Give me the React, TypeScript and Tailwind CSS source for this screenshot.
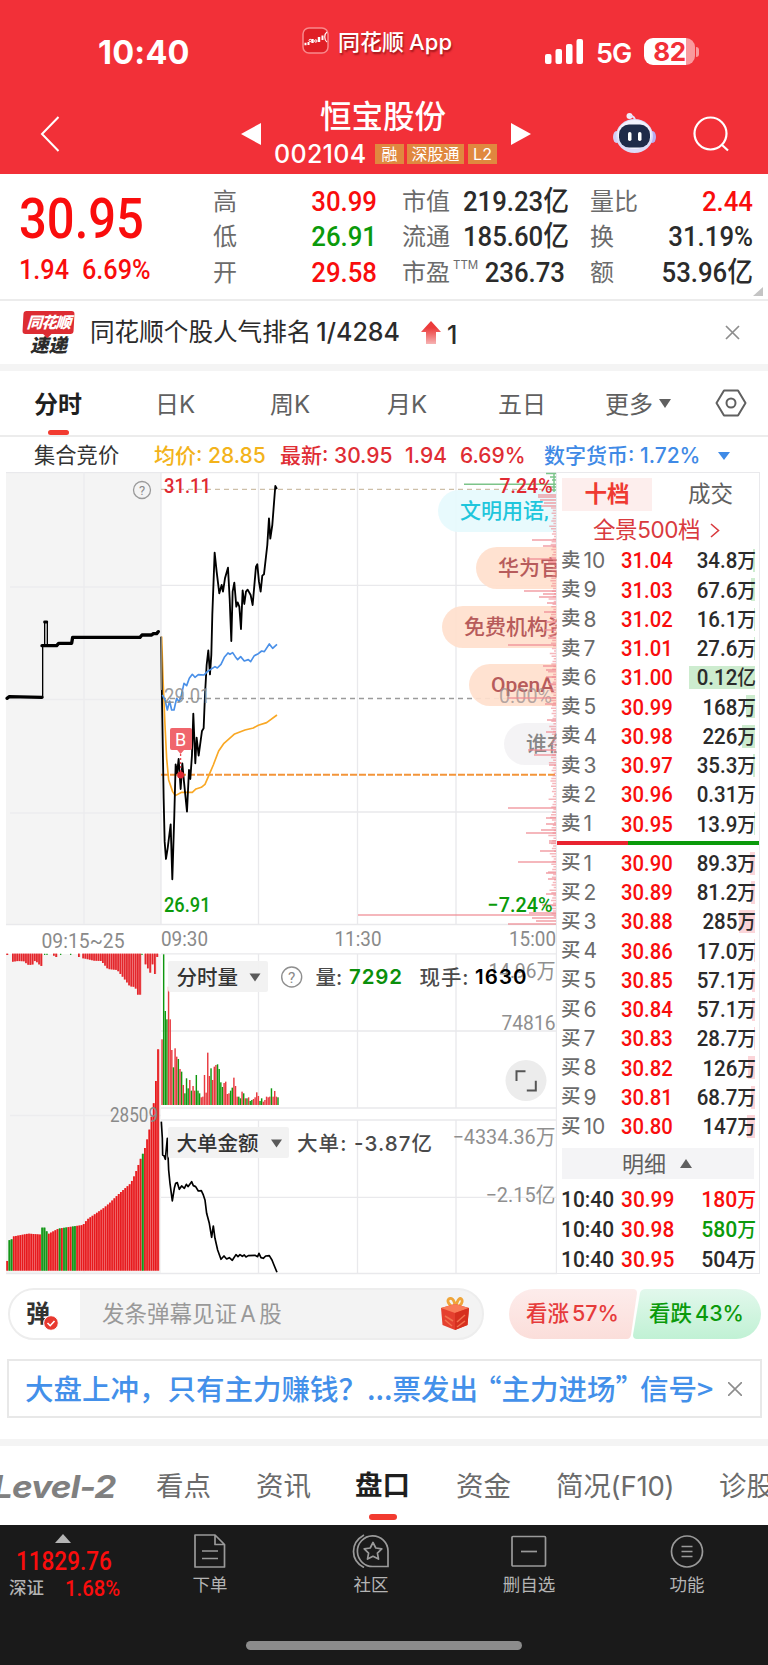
import { Fragment, type SVGProps } from "react";
import clsx from "clsx";

type Tone = "r" | "g";

interface Level {
  name: string;
  no: number;
  price: string;
  volume: string;
  depth: number;
}

const NUM = "[font-family:Roboto,'Noto_Sans_CJK_SC',sans-serif] font-medium";
const GRID = "#e9e9ec";

const sells: Level[] = [
  { name: "卖", no: 10, price: "31.04", volume: "34.8万", depth: 2 },
  { name: "卖", no: 9, price: "31.03", volume: "67.6万", depth: 4 },
  { name: "卖", no: 8, price: "31.02", volume: "16.1万", depth: 1 },
  { name: "卖", no: 7, price: "31.01", volume: "27.6万", depth: 1 },
  { name: "卖", no: 6, price: "31.00", volume: "0.12亿", depth: 66 },
  { name: "卖", no: 5, price: "30.99", volume: "168万", depth: 9 },
  { name: "卖", no: 4, price: "30.98", volume: "226万", depth: 13 },
  { name: "卖", no: 3, price: "30.97", volume: "35.3万", depth: 2 },
  { name: "卖", no: 2, price: "30.96", volume: "0.31万", depth: 0 },
  { name: "卖", no: 1, price: "30.95", volume: "13.9万", depth: 1 },
];

const buys: Level[] = [
  { name: "买", no: 1, price: "30.90", volume: "89.3万", depth: 5 },
  { name: "买", no: 2, price: "30.89", volume: "81.2万", depth: 4 },
  { name: "买", no: 3, price: "30.88", volume: "285万", depth: 16 },
  { name: "买", no: 4, price: "30.86", volume: "17.0万", depth: 1 },
  { name: "买", no: 5, price: "30.85", volume: "57.1万", depth: 3 },
  { name: "买", no: 6, price: "30.84", volume: "57.1万", depth: 3 },
  { name: "买", no: 7, price: "30.83", volume: "28.7万", depth: 1 },
  { name: "买", no: 8, price: "30.82", volume: "126万", depth: 7 },
  { name: "买", no: 9, price: "30.81", volume: "68.7万", depth: 4 },
  { name: "买", no: 10, price: "30.80", volume: "147万", depth: 8 },
];

const ticks = [
  { time: "10:40", price: "30.99", volume: "180万", tone: "text-[#f90d0d]" },
  { time: "10:40", price: "30.98", volume: "580万", tone: "text-[#0b9a0b]" },
  { time: "10:40", price: "30.95", volume: "504万", tone: "text-[#2b2b2b]" },
];

// All series live on a 3x grid, see the scale() on their groups
const PRICE =
  "483,515 487,760 491,1000 494,1130 498,1182 503,1150 512,1078 517,1243 523,1050 527,898 531,925 536,882 542,972 547,895 552,950 561,1040 567,915 571,942 576,870 580,746 586,895 590,818 596,872 606,798 611,790 615,690 620,600 625,556 630,628 634,570 637,450 644,263 650,320 658,385 665,360 669,380 675,340 684,308 689,400 694,528 698,380 703,353 709,425 713,412 718,425 723,492 728,376 733,417 738,380 743,374 752,390 758,420 768,305 772,298 777,350 782,380 787,332 792,328 802,240 807,160 811,221 817,180 826,63 831,72";
const INDUSTRY =
  "487,690 495,705 502,735 509,708 515,735 522,735 530,700 537,710 542,700 552,655 560,662 568,640 577,628 585,637 595,629 612,630 622,620 645,605 652,609 663,598 673,577 684,564 690,568 698,563 706,575 713,584 722,575 733,588 745,584 752,590 763,572 775,566 785,558 793,560 808,537 818,550 831,538";
const AVERAGE =
  "485,515 489,640 495,780 500,880 506,945 518,980 526,992 545,982 577,982 588,972 604,967 615,958 625,935 640,900 656,858 672,835 704,807 735,795 760,789 775,781 800,773 831,750";
const BIG_ORDER =
  "484,590 487,640 488,690 492,692 496,703 502,640 506,735 510,775 517,828 523,790 527,775 532,773 538,793 545,783 553,790 559,778 564,785 575,770 580,782 587,785 595,798 604,797 610,810 615,825 620,865 628,895 635,937 640,903 645,940 653,975 663,1003 672,993 680,1002 688,998 697,1006 708,989 714,995 720,989 727,994 733,990 738,996 745,992 765,991 773,995 777,985 783,998 790,1000 797,993 808,992 816,1005 822,1020 831,1042";

const VOLUME =
  "r343 g88 g258 g283 r185 r283 r375 g427 r370 r395 g402 r432 g440 r480 g505 g460 g490 r465 g497 r483 r497 g450 g497 g505 r517 r515 r450 r503 r383 r453 g430 r465 r425 r420 g418 g432 g472 g486 r474 r470 r507 r505 g497 g488 r458 r483 r515 g515 g520 r500 g505 r520 g520 r517 g528 g525 r522 r517 r502 r513 g528 g520 r530 r525 r515 r517 r515 g490 r515 r498 r515 g517"
    .split(" ")
    .map((s) => ({ tone: s[0] as Tone, top: Number(s.slice(1)) }));

const AUCTION_SHAPE = [
  [24, 946], [34, 945], [37, 935], [85, 926], [125, 929], [126, 908], [138, 908], [141, 929],
  [175, 911], [215, 905], [249, 900], [262, 883], [310, 850], [330, 833], [355, 808], [392, 775],
  [405, 748], [418, 712], [425, 692], [432, 680], [446, 625], [452, 590], [459, 548], [466, 502], [472, 373],
];
const UNMATCHED_SHAPE = [
  [37, 110], [52, 108], [72, 109], [80, 119], [95, 120], [104, 106], [114, 117], [124, 124],
];
const UNMATCHED_TAIL = [
  [250, 100], [280, 107], [302, 108], [312, 120], [322, 132], [350, 135], [370, 160], [388, 184],
  [404, 186], [411, 209], [418, 209],
];

function interpolate(shape: number[][], x: number) {
  for (let i = 1; i < shape.length; i++) {
    const [x0, y0] = shape[i - 1];
    const [x1, y1] = shape[i];
    if (x <= x1) return y0 + ((y1 - y0) * Math.max(0, x - x0)) / (x1 - x0);
  }
  return shape[shape.length - 1][1];
}

const GREEN_AUCTION = [1, 2, 16, 17, 18, 24, 26, 27, 30, 31, 62];
const STEP = 6.56;

const auctionBars = Array.from({ length: 70 }, (_, i) => {
  const x = 19 + i * STEP;
  return { x, top: i === 0 ? 1008 : interpolate(AUCTION_SHAPE, x + 2.5), green: GREEN_AUCTION.includes(i) };
});

const unmatchedBars = [
  ...Array.from({ length: 14 }, (_, i) => 37 + i * STEP).map((x) => ({ x, h: interpolate(UNMATCHED_SHAPE, x) })),
  ...Array.from({ length: 27 }, (_, i) => 248 + i * STEP).map((x) => ({ x, h: interpolate(UNMATCHED_TAIL, x) })),
  { x: 20, h: 90 }, { x: 160, h: 92 }, { x: 167, h: 96 }, { x: 235, h: 96 },
  { x: 435, h: 118 }, { x: 442, h: 130 }, { x: 449, h: 143 }, { x: 456, h: 118 }, { x: 463, h: 147 }, { x: 470, h: 96 },
];

// Chip distribution along the right edge: [left x, y]
const DEPTH_LONG = [
  [538, 495], [538, 497], [540, 500], [544, 503], [541, 506], [532, 540], [543, 546], [527, 559],
  [548, 562], [524, 591], [543, 594], [539, 597], [547, 603], [544, 612], [546, 622], [544, 630],
  [548, 638], [508, 645], [543, 666], [546, 670], [546, 677], [548, 684], [508, 698], [545, 704],
  [547, 720], [546, 732], [528, 750], [534, 755], [549, 765], [508, 808], [546, 818], [546, 824],
  [541, 830], [526, 833], [549, 841], [549, 843], [540, 851], [518, 862], [546, 873], [548, 879],
  [546, 894], [542, 905], [358, 915], [529, 913], [532, 918], [536, 921], [508, 924],
];
const depthShort = Array.from({ length: 158 }, (_, i) => ({
  y: 508 + i * 2.6,
  w: 2 + ((i * 37) % 11) * 0.3 + (i % 7 === 0 ? 3 : 0),
}));

const danmaku = [
  { x: 438, y: 490, text: "文明用语,", bg: "#e6fafd", color: "#1fc6dc" },
  { x: 476, y: 547, text: "华为官", bg: "#ffe0cd", color: "#b75b5b" },
  { x: 442, y: 606, text: "免费机构资", bg: "#ffe0cd", color: "#b75b5b" },
  { x: 469, y: 664, text: "OpenA", bg: "#ffe0cd", color: "#b75b5b" },
  { x: 504, y: 723, text: "谁在", bg: "#f3f2f4", color: "#868686" },
];

function Label(props: SVGProps<SVGTextElement>) {
  return <text lengthAdjust="spacingAndGlyphs" {...props} />;
}

function Header() {
  return (
    <header className="h-[174px] bg-[#f23038] text-white">
      <div className="flex h-[90px] items-start">
        <span className="ml-[98px] mt-[37px] w-[204px] text-[32.500px]/8 font-bold tracking-[0.2px]">10:40</span>
        <svg className="mt-[27px] shrink-0" width="27" height="27" viewBox="0 0 27 27">
          <rect x="1" y="1" width="25" height="25" rx="6" fill="#e01f26" stroke="#f9898c" strokeWidth="1.5" />
          <path d="M2.500 17h2M10.500 16v-4M17 15v-5" stroke="#fff" strokeWidth="2.400" />
          <path d="M6.500 18v-3M20.500 13V8.500" stroke="#fff" strokeWidth="2" />
          <circle cx="8.200" cy="13.500" r="1.200" stroke="#fff" fill="none" />
          <circle cx="13.800" cy="14" r="1.200" stroke="#fff" fill="none" />
          <path d="M25 5c-3 2-3 8 0 10" stroke="#fff" strokeWidth="1.200" fill="none" />
        </svg>
        <span className="ml-[9px] mt-[28px] flex w-[206px] gap-[5px] whitespace-nowrap text-[22px]/7 font-medium [text-shadow:1px_2px_2px_rgba(90,0,0,0.55)]">
          <span>同花顺</span>
          <span className="tracking-[0.2px]">App</span>
        </span>
        <svg className="mt-[39px] shrink-0" width="40" height="25" viewBox="0 0 40 25" fill="#fff">
          <rect x="1" y="15" width="6.500" height="10" rx="2" />
          <rect x="11.500" y="10" width="6.500" height="15" rx="2" />
          <rect x="22" y="5" width="6.500" height="20" rx="2" />
          <rect x="32.500" y="0" width="6.500" height="25" rx="2" />
        </svg>
        <span className="ml-[12px] mt-[38px] w-[48px] text-[27px]/8 font-semibold tracking-[-1px]">5G</span>
        <div className="mt-[38px] flex h-[27px] w-[51px] items-center justify-center rounded-[9px] bg-linear-to-r from-white from-83% to-[#f99a9e] to-83% text-[26px] font-bold tracking-[-0.5px] text-[#f23038]">
          82
        </div>
        <div className="mt-[47px] ml-[1px] h-[10px] w-[3px] rounded-r-full bg-[#f99a9e]" />
      </div>
      <div className="flex h-[84px] items-start">
        <svg className="ml-[40px] mt-[26px]" width="20" height="36" viewBox="0 0 20 36" fill="none" stroke="#fff" strokeWidth="2">
          <path d="M18.500 1L2 18l16.500 17" />
        </svg>
        <svg className="ml-[181px] mt-[33px]" width="20" height="22" viewBox="0 0 20 22" fill="#fff">
          <path d="M0 11L20 0v22z" />
        </svg>
        <div className="ml-[13px] w-[237px]">
          <div className="mt-[9px] pl-[46px] text-[31.500px]/9 font-medium">恒宝股份</div>
          <div className="mt-[9px] flex h-5 items-center text-[17px]">
            <span className="w-[101px] text-[25px] font-medium tracking-[0.3px]">002104</span>
            <span className="flex h-5 w-[29px] items-center justify-center bg-[#e0883f] text-[16px]">融</span>
            <span className="ml-[3px] flex h-5 w-[57px] items-center justify-center bg-[#e0883f] text-[16px]">深股通</span>
            <span className="ml-[4px] flex h-5 w-[29px] items-center justify-center bg-[#e0883f] text-[16px]">L2</span>
          </div>
        </div>
        <svg className="mt-[33px]" width="20" height="22" viewBox="0 0 20 22" fill="#fff">
          <path d="M20 11L0 0v22z" />
        </svg>
        <svg className="ml-[81px] mt-[23px]" width="45" height="41" viewBox="0 0 45 41">
          <circle cx="17.500" cy="3" r="3" fill="#f0eefc" />
          <path d="M18 3c4 0 5 2 5 5" stroke="#e5e0f8" strokeWidth="1.800" fill="none" />
          <ellipse cx="4.500" cy="24" rx="3.500" ry="6" fill="#d3cdf5" />
          <ellipse cx="40.500" cy="24" rx="3.500" ry="6" fill="#b9aef0" />
          <ellipse cx="22.500" cy="23" rx="18.500" ry="17" fill="#dcdcf8" />
          <ellipse cx="22.500" cy="21.500" rx="17" ry="14.500" fill="#f2f2fd" />
          <rect x="7" y="11.500" width="31" height="23" rx="10" fill="#1f2b49" />
          <rect x="16" y="19" width="3.500" height="9" rx="1.700" fill="#fff" />
          <rect x="26" y="19" width="3.500" height="9" rx="1.700" fill="#fff" />
        </svg>
        <svg className="ml-[36px] mt-[26px]" width="37" height="37" viewBox="0 0 37 37" fill="none" stroke="#fff" strokeWidth="2.200">
          <circle cx="17.500" cy="17.500" r="16" />
          <path d="M28.500 28.500l6.500 6" />
        </svg>
      </div>
    </header>
  );
}

function Quote() {
  const rows = [
    ["高", "30.99", "text-[#f90d0d]", "市值", "219.23亿", "量比", "2.44"],
    ["低", "26.91", "text-[#0b9a0b]", "流通", "185.60亿", "换", "31.19%"],
    ["开", "29.58", "text-[#f90d0d]", "市盈", "236.73", "额", "53.96亿"],
  ];
  return (
    <section className="flex h-[127px] items-start border-b-2 border-[#ececec]">
      <div className={clsx(NUM, "w-[213px] pl-[19px] text-[#f90d0d]")}>
        <div className="mt-[17px] origin-left scale-x-[0.89] text-[55px]/[56px]">30.95</div>
        <div className="mt-[7px] flex text-[28px]/8">
          <span className="w-[63px] origin-left scale-x-[0.9]">1.94</span>
          <span className="origin-left scale-x-[0.9]">6.69%</span>
        </div>
      </div>
      <div className="pt-[10px]">
        {rows.map(([a, high, tone, b, cap, c, last], i) => (
          <div key={a} className="flex h-[35.500px] items-center text-[24px] text-[#6b6b6b]">
            <span className="w-[70px]">{a}</span>
            <span className={clsx(NUM, "w-[94px] origin-right scale-x-[0.92] text-right text-[28px]", tone)}>{high}</span>
            <span className="relative ml-[25px] w-[52px]">
              {b}
              {i === 2 && <sup className="absolute -top-[1px] left-[51px] text-[11.500px] leading-none">TTM</sup>}
            </span>
            <span className={clsx(NUM, "w-[111px] origin-right scale-x-[0.92] whitespace-nowrap text-right text-[28px] text-[#2b2b2b]")}>{cap}</span>
            <span className="ml-[25px] w-[52px]">{c}</span>
            <span className={clsx(NUM, "w-[111px] origin-right scale-x-[0.92] whitespace-nowrap text-right text-[28px]", i === 0 ? "text-[#f90d0d]" : "text-[#2b2b2b]")}>{last}</span>
          </div>
        ))}
      </div>
      <svg className="mt-[113px]" width="10" height="9" viewBox="0 0 10 9" fill="#c4c4c4">
        <path d="M10 0v9H0z" />
      </svg>
    </section>
  );
}

function RankBanner() {
  return (
    <section className="flex h-[63px] items-center text-[#2b2b2b]">
      <div className="ml-[23px] w-[67px]">
        <div className="relative flex h-[23px] w-[51px] -skew-x-3 items-center justify-center rounded-[3px] bg-[#dd2c33] text-[15.500px] font-black italic tracking-[-1px] text-white">
          同花顺
          <span className="absolute left-[22px] top-[20px] size-[6px] rotate-45 bg-[#dd2c33]" />
        </div>
        <div className="h-[21px] w-[51px] text-center text-[18.500px]/[22px] font-black italic">速递</div>
      </div>
      <span className="w-[331px] whitespace-nowrap text-[24.600px]">
        同花顺个股人气排名<span className="ml-[5px] text-[25px] font-medium">1/4284</span>
      </span>
      <svg width="20" height="23" viewBox="0 0 20 23">
        <defs>
          <linearGradient id="rise" x1="0" y1="0" x2="0" y2="1">
            <stop offset="0.3" stopColor="#ec3b3b" />
            <stop offset="1" stopColor="#f6b3b3" />
          </linearGradient>
        </defs>
        <path d="M10 0L20 11h-5v12H5V11H0z" fill="url(#rise)" />
      </svg>
      <span className="ml-[6px] mt-[6px] w-[278px] text-[25px] font-medium">1</span>
      <svg width="15" height="15" viewBox="0 0 15 15" stroke="#8d8d8d" strokeWidth="1.700">
        <path d="M1 1l13 13M14 1L1 14" />
      </svg>
    </section>
  );
}

function PeriodTabs() {
  return (
    <nav className="flex h-[66px] items-center border-b-2 border-[#ececec] text-[24px] text-[#606060]">
      <div className="ml-[34px] flex h-full w-[121px] flex-col font-bold text-[#1f1f1f]">
        <span className="flex h-[59px] items-center pt-[9px]">分时</span>
        <span className="ml-[14px] h-[5px] w-[21px] shrink-0 rounded-full bg-[#f23b30]" />
      </div>
      <span className="w-[115px] pt-[3px]">日K</span>
      <span className="w-[117px] pt-[3px]">周K</span>
      <span className="w-[111px] pt-[3px]">月K</span>
      <span className="w-[107px] pt-[3px]">五日</span>
      <span className="w-[54px] pt-[3px]">更多</span>
      <svg width="12" height="9" viewBox="0 0 12 9" fill="#606060">
        <path d="M0 0h12L6 9z" />
      </svg>
      <svg className="ml-[44px]" width="32" height="28" viewBox="0 0 32 28" fill="none" stroke="#606060" strokeWidth="2">
        <path d="M9 1.500h14L30.500 14 23 26.500H9L1.500 14z" strokeLinejoin="round" />
        <circle cx="16" cy="14" r="4.500" />
      </svg>
    </nav>
  );
}

function Summary() {
  return (
    <div className="flex h-[35px] items-center whitespace-nowrap pt-[2px] text-[21px] font-medium">
      <span className="ml-[34px] w-[120px] text-[21.300px] font-normal text-[#333]">集合竞价</span>
      <span className="w-[126px] text-[#f3b31b]">均价: 28.85</span>
      <span className="w-[125px] text-[#df2d34]">最新: 30.95</span>
      <span className="w-[55px] text-[#df2d34]">1.94</span>
      <span className="w-[84px] text-[#df2d34]">6.69%</span>
      <span className="w-[174px] text-[#3f8ae6]">数字货币: 1.72%</span>
      <svg width="12" height="8" viewBox="0 0 12 8" fill="#3f8ae6">
        <path d="M0 0h12L6 8z" />
      </svg>
    </div>
  );
}

function Chart() {
  return (
    <svg
      className="shrink-0"
      width="557"
      height="803"
      viewBox="0 472 557 803"
      fontFamily="Roboto, 'Noto Sans CJK SC', sans-serif"
    >
      <clipPath id="plot">
        <rect x="6" y="472" width="550.500" height="803" />
      </clipPath>
      <rect x="6" y="472.500" width="155" height="452" fill="#f4f4f4" />
      <rect x="6" y="954" width="155" height="319" fill="#f4f4f4" />
      <g stroke={GRID} strokeWidth="1.300">
        <path d="M6 472.700H557M6 924.500H557M161 953.800H557M161 1108H557M161 1120H557M6 1273.500H557" />
        <path d="M161 585.300H557M161 812H557M161 1031H557M161 1197.300H557" />
        <path d="M10 587H161M10 699.500H161M10 813H161M84 472V924M84 954V1273M10 1115.500H161" stroke="#ececee" />
        <path d="M161 472V924M258.500 472V924M357.500 472V924M456 472V924" />
        <path d="M258.500 954V1108M357.500 954V1108M456 954V1108M258.500 1120V1273M357.500 1120V1273M456 1120V1273" />
        <path d="M556.800 472V1273" strokeWidth="2" />
      </g>

      {/* opening auction */}
      <g fill="none" stroke="#000" transform="translate(0 465) scale(0.3333)" strokeLinecap="round" strokeLinejoin="round">
        <path d="M21 700L28 695L126 697M126 542H170L176 535H215L218 517H420L426 510H455L460 506H470L475 500" strokeWidth="10" />
        <path d="M128 697V542M134 470V542M142 470V542" strokeWidth="4" />
        <path d="M134 471H140" strokeWidth="9" />
      </g>
      <circle cx="142" cy="490" r="8.500" fill="none" stroke="#9a9a9a" strokeWidth="1.300" />
      <text x="142" y="495" fontSize="13" fill="#8a8a8a" textAnchor="middle">?</text>

      <g clipPath="url(#plot)">
        <path d="M161 489.300H556" stroke="#cdbfa8" strokeWidth="1.200" strokeDasharray="5 4" />
        <path d="M161 698.500H556" stroke="#9b9b9b" strokeWidth="1.400" strokeDasharray="5 4" />
        <path d="M161 774.800H556" stroke="#f3953a" strokeWidth="2" strokeDasharray="7 2" />
        {danmaku.map((d) => (
          <Fragment key={d.text}>
            <rect x={d.x} y={d.y} width="160" height="42" rx="21" fill={d.bg} fillOpacity="0.93" />
            <text x={d.x + 22} y={d.y + 28} fontSize="21" fontWeight="500" fill={d.color}>{d.text}</text>
          </Fragment>
        ))}
        <Label x="552" y="702.500" fontSize="21" fill="#9c9090" fillOpacity="0.75" textAnchor="end" textLength="53">0.00%</Label>
        <g stroke="#ef8790" strokeOpacity="0.6">
          {DEPTH_LONG.map(([x, y]) => (
            <path key={`${x}-${y}`} d={`M${x} ${y}H556`} strokeWidth="1.800" />
          ))}
          {depthShort.map((b) => (
            <path key={b.y} d={`M${556 - b.w} ${b.y}H556`} strokeWidth="1.500" />
          ))}
        </g>
        <path d="M464 484.300H556M546 473.500H556M550 477H556M552 480H556M549 487H556M551 490H556M554 473V492" stroke="#7cc48a" strokeWidth="1.500" />
      </g>

      <g fill="none" strokeLinejoin="round" transform="translate(0 465) scale(0.3333)">
        <polyline points={AVERAGE} stroke="#f9a825" strokeWidth="5" />
        <polyline points={PRICE} stroke="#000" strokeWidth="5.500" />
        <polyline points={INDUSTRY} stroke="#4a90e8" strokeWidth="5" />
      </g>
      <Label x="164" y="702.500" fontSize="21" fill="#8f8f8f" fillOpacity="0.9" textLength="46.500">29.01</Label>
      <path d="M161.300 637V690" stroke="#8c8676" strokeWidth="1.500" />

      {/* buy marker */}
      <path d="M180.600 750V774" stroke="#e8474f" strokeWidth="1.300" strokeDasharray="2 2" />
      <path d="M172 728h18a2 2 0 0 1 2 2v18a2 2 0 0 1-2 2h-6l-3.400 4-3.400-4H172a2 2 0 0 1-2-2v-18a2 2 0 0 1 2-2z" fill="#f0656c" />
      <text x="180.700" y="745.500" fontSize="18" fill="#fff" textAnchor="middle">B</text>
      <circle cx="180.600" cy="775" r="3.500" fill="#dc2630" />

      <g fontSize="21" fontWeight="500">
        <Label x="164" y="492.500" fill="#e02a33" textLength="47">31.11</Label>
        <Label x="552.500" y="492.500" fill="#e02a33" textAnchor="end" textLength="53">7.24%</Label>
        <Label x="164" y="911.500" fill="#0b9a0b" textLength="46.500">26.91</Label>
        <Label x="552.500" y="911.500" fill="#0b9a0b" textAnchor="end" textLength="65">−7.24%</Label>
      </g>
      <g fontSize="21" fill="#8a8a8a">
        <Label x="41.500" y="947.500" textLength="83">09:15~25</Label>
        <Label x="161" y="946" textLength="47">09:30</Label>
        <Label x="334.500" y="946" textLength="47">11:30</Label>
        <Label x="556" y="946" textAnchor="end" textLength="47">15:00</Label>
      </g>

      <g transform="translate(0 925) scale(0.3333)">
        {unmatchedBars.map((b) => (
          <Fragment key={b.x}>
            <rect x={b.x - 1} y="86" width={STEP} height={b.h - 86} fill="#f39090" />
            <rect x={b.x - 1} y="86" width="4.900" height={b.h - 86} fill="#e3262c" />
          </Fragment>
        ))}
        <path d="M132 88H136M139 88H143M180 88H184M210 88H214M424 88H428" stroke="#1d9a20" strokeWidth="4" />
        {auctionBars.map((b) => (
          <Fragment key={b.x}>
            <rect x={b.x} y={b.top} width={STEP} height={1037 - b.top} fill={b.green ? "#5fbb62" : "#f27a7a"} />
            <rect x={b.x} y={b.top} width="4.800" height={1037 - b.top} fill={b.green ? "#149619" : "#e7191d"} />
          </Fragment>
        ))}
        {VOLUME.map((v, i) => (
          <rect
            key={i}
            x={484 + i * 4.9}
            y={v.top}
            width="4.300"
            height={540 - v.top}
            fill={v.tone === "r" ? "#e8393f" : "#0f970f"}
          />
        ))}
        <polyline points={BIG_ORDER} fill="none" stroke="#000" strokeWidth="5" strokeLinejoin="round" />
      </g>
      <Label x="158" y="1122" fontSize="20" fill="#8a8a8a" textAnchor="end" textLength="48">28509</Label>

      <rect x="168" y="961" width="100" height="31" rx="2" fill="#f1f1f1" fillOpacity="0.93" />
      <rect x="168" y="1127" width="121" height="31" rx="2" fill="#f1f1f1" fillOpacity="0.93" />
      <path d="M249.500 973.500h11l-5.500 8zM271 1139.500h11l-5.500 8z" fill="#5a5a5a" />
      <g fontSize="21" fill="#8f8f8f">
        <Label x="555.500" y="977.500" textAnchor="end" textLength="67">14.96万</Label>
        <Label x="555.500" y="1029.500" textAnchor="end" textLength="54">74816</Label>
        <Label x="555.500" y="1143.500" textAnchor="end" textLength="103">−4334.36万</Label>
        <Label x="555.500" y="1201.500" textAnchor="end" textLength="70">−2.15亿</Label>
      </g>
      <circle cx="291.700" cy="977" r="10" fill="none" stroke="#8f8f8f" strokeWidth="1.400" />
      <text x="291.700" y="982.500" fontSize="15.500" fill="#8a8a8a" textAnchor="middle">?</text>
      <g fontFamily="Inter, 'Noto Sans CJK SC', sans-serif" fontSize="20.500" fill="#333">
        <text x="176.500" y="984.500" fontWeight="500">分时量</text>
        <text x="176.500" y="1150.500" fontWeight="500">大单金额</text>
        <text x="315.500" y="984.500" fill="#4a4a4a" fontWeight="500">量:</text>
        <text x="349" y="984.300" fontWeight="600" fill="#0b8f0b" textLength="53">7292</text>
        <text x="419.500" y="984.500" fill="#4a4a4a" fontWeight="500" textLength="49">现手:</text>
        <text x="475" y="984.300" fontWeight="600" fill="#000" textLength="51.500">1630</text>
        <text x="297" y="1150.500" fill="#4a4a4a" fontWeight="500" textLength="135">大单: -3.87亿</text>
      </g>
      <circle cx="526" cy="1080.500" r="20.500" fill="#ececec" />
      <path d="M516.500 1081v-9.700h9M526.800 1090.500h9v-9.700" fill="none" stroke="#555" strokeWidth="2" />
    </svg>
  );
}

function LevelRow({ level, barClass }: { level: Level; barClass: string }) {
  return (
    <div className="relative flex h-[29.260px] items-center text-[#6b6b6b]">
      <span className={clsx("absolute right-[1px] h-[23px]", barClass)} style={{ width: level.depth }} />
      <span className="relative w-[22.500px] text-[19.500px] font-medium">{level.name}</span>
      <span className="relative w-[37.500px] text-[21px]">{level.no}</span>
      <span className={clsx(NUM, "relative w-[54px] origin-left scale-x-[0.9] text-[22.500px] text-[#f90d0d]")}>{level.price}</span>
      <span className={clsx(NUM, "relative flex-1 origin-right scale-x-[0.91] whitespace-nowrap text-right text-[22.500px] text-[#2b2b2b]")}>
        {level.volume.slice(0, -1)}
        <span className="text-[20.500px]">{level.volume.slice(-1)}</span>
      </span>
    </div>
  );
}

function OrderBook() {
  return (
    <aside className="h-[802px] w-[203px] border-y border-r border-[#e9e9ec]">
      <div className="mt-[5px] flex h-[33px] items-center text-[22.500px]">
        <span className="ml-[5px] flex h-full w-[90px] items-center justify-center bg-[#fdeeed] font-bold text-[#ef3a32]">十档</span>
        <span className="ml-[36px] text-[#606060]">成交</span>
      </div>
      <div className="flex h-[35px] items-center pl-[36px] pt-[4px] text-[22.500px] text-[#d93a3e]">
        <span className="w-[117px] whitespace-nowrap tracking-[-0.400px]">全景500档</span>
        <svg width="10" height="15" viewBox="0 0 10 15" fill="none" stroke="#d93a3e" strokeWidth="1.600">
          <path d="M1 1l7.500 6.500L1 14" />
        </svg>
      </div>
      <div className="pl-[4px]">
        {sells.map((l) => (
          <div key={l.no} className="pr-[3px]">
            <LevelRow level={l} barClass="bg-[#cdeccf]" />
          </div>
        ))}
      </div>
      <div className="mt-[2px] h-[4px] bg-linear-to-r from-[#e8222f] from-35% to-[#0b9a0b] to-35%" />
      <div className="mt-[4px] pl-[4px]">
        {buys.map((l) => (
          <div key={l.no} className="pr-[3px]">
            <LevelRow level={l} barClass="bg-[#fbd5d9]" />
          </div>
        ))}
      </div>
      <div className="mx-[5px] mt-[7px] flex h-[31px] items-center bg-[#f4f4f6] pl-[60px] text-[22px] text-[#606060]">
        明细
        <svg className="ml-[14px]" width="12" height="9" viewBox="0 0 12 9" fill="#606060">
          <path d="M0 9h12L6 0z" />
        </svg>
      </div>
      <div className={clsx(NUM, "mt-[5px] pl-[4px] pr-[3px] text-[22.500px]")}>
        {ticks.map((t) => (
          <div key={t.price} className="flex h-[30.300px] items-center">
            <span className="w-[60px] origin-left scale-x-[0.93] text-[#2b2b2b]">{t.time}</span>
            <span className="w-[56px] origin-left scale-x-[0.93] text-[#f90d0d]">{t.price}</span>
            <span className={clsx("flex-1 origin-right scale-x-[0.94] text-right", t.tone)}>
              {t.volume.slice(0, -1)}
              <span className="text-[20px]">万</span>
            </span>
          </div>
        ))}
      </div>
    </aside>
  );
}

function DanmakuBar() {
  return (
    <div className="flex h-[84px] items-start pt-[13px]">
      <div className="ml-[8px] flex h-[52px] w-[476px] items-center overflow-hidden rounded-full border-2 border-[#ededed] bg-[#f3f3f3]">
        <div className="relative flex h-full w-[70px] items-center bg-white pl-[16px] text-[24px] font-bold text-[#333]">
          弹
          <svg className="absolute left-[33px] top-[25px]" width="16" height="16" viewBox="0 0 16 16">
            <circle cx="8" cy="8" r="7.300" fill="#e8392f" stroke="#fff" />
            <path d="M4.500 8l2.700 2.700L11.500 6" fill="none" stroke="#fff" strokeWidth="1.600" />
          </svg>
        </div>
        <span className="ml-[22px] w-[338px] text-[22.500px] text-[#999] [word-spacing:-3px]">发条弹幕见证 A 股</span>
        <svg width="30" height="34" viewBox="0 0 30 34">
          <path d="M15 10C8 9 6 2 10 1.500S15 7 15 10s2-8 5-8.500 4 7.500-5 8.500z" fill="none" stroke="#efa53a" strokeWidth="2.800" />
          <path d="M1 11l14-4 14 4-1.500 17L15 33 2.500 28z" fill="#e5402f" />
          <path d="M1 11l14-4 14 4-14 5z" fill="#f97b58" />
          <path d="M15 16v17l12.500-5L29 11z" fill="#d6301f" />
          <path d="M5 19l8 5M5 23l7 6M25 18l-8 7M25 24l-8 6" stroke="#f2714f" strokeWidth="1.500" />
        </svg>
      </div>
      <div className="ml-[25px] mt-[1px] flex h-[50px] text-[21.500px] font-medium">
        <div className="flex w-[129px] items-center bg-linear-to-b from-[#fdeceb] to-[#fbdeda] pl-[17px] text-[#e63b3b] [clip-path:path('M25_0H124q4_0_4_4L122_46q-1_4-4_4H25A25_25_0_0_1_25_0z')]">
          看涨<span className="ml-[3px]">57%</span>
        </div>
        <div className="-ml-[5px] flex w-[129px] items-center bg-linear-to-b from-[#e2f8ec] to-[#c0f1d4] pl-[16px] text-[#0b9a0b] [clip-path:path('M13_0H103A25_25_0_0_1_103_50H4q-4_0-4-4L7_4q1-4_6-4z')]">
          看跌<span className="ml-[3px]">43%</span>
        </div>
      </div>
    </div>
  );
}

function PromoBar() {
  return (
    <div className="ml-[7px] flex h-[59px] w-[755px] items-center border-2 border-[#e8e8e8] text-[#4390ea]">
      <span className="ml-[16px] w-[703px] whitespace-nowrap text-[28.500px] font-medium [font-family:'Noto_Sans_CJK_SC',sans-serif]">
        大盘上冲，只有主力赚钱？...票发出<span className="-ml-[5px]">“</span>主力进场<span className="-mr-[4px]">”</span>信号&gt;
      </span>
      <svg width="14" height="14" viewBox="0 0 14 14" stroke="#8d8d8d" strokeWidth="1.600">
        <path d="M0 0l14 14M14 0L0 14" />
      </svg>
    </div>
  );
}

function SectionTabs() {
  return (
    <nav className="flex h-[79px] items-center overflow-hidden whitespace-nowrap pt-[2px] text-[27.500px] text-[#6b6b6b]">
      <span className="-ml-[7px] w-[163px] shrink-0 origin-left scale-x-[1.13] text-[31px] font-bold italic tracking-[-0.700px] text-[#808080]">Level-2</span>
      <span className="w-[100px] shrink-0">看点</span>
      <span className="w-[99px] shrink-0">资讯</span>
      <span className="flex h-full w-[101px] shrink-0 flex-col font-bold text-[#1f1f1f]">
        <span className="flex h-[66px] items-center pt-[10px]">盘口</span>
        <span className="ml-[14px] h-[6px] w-[28px] rounded-full bg-[#f23b30]" />
      </span>
      <span className="w-[100px] shrink-0">资金</span>
      <span className="w-[163px] shrink-0 tracking-[-0.200px]">简况(F10)</span>
      <span className="shrink-0">诊股</span>
    </nav>
  );
}

function BottomBar() {
  return (
    <footer className="flex h-[140px] flex-col bg-[#1a1a1a] text-[17.500px] text-[#b4b4b4]">
      <div className="flex h-[116px] items-start">
        <div className={clsx(NUM, "w-[185px]")}>
          <svg className="ml-[55px] mt-[9px]" width="16" height="9" viewBox="0 0 16 9" fill="#b4b4b4">
            <path d="M0 9h16L8 0z" />
          </svg>
          <div className="ml-[16px] mt-[6px] origin-left scale-x-[0.9] text-[25px]/[26px] text-[#fa0d0d]">11829.76</div>
          <div className="mt-[2px] flex h-6 items-center pl-[9px]">
            <span className="w-[56px] text-[17.500px]">深证</span>
            <span className="origin-left scale-x-[0.92] text-[22px] text-[#fa0d0d]">1.68%</span>
          </div>
        </div>
        <div className="mt-[9px] flex w-[50px] flex-col items-center gap-[8px]">
          <svg width="32" height="34" viewBox="0 0 32 34" fill="none" stroke="#9a9a9a" strokeWidth="1.700">
            <path d="M1 1h20l9.500 9.500V33H1zM21 1v9.500h9.500M8 17h16M8 24.500h16" strokeLinejoin="round" />
          </svg>
          <span>下单</span>
        </div>
        <div className="ml-[111px] mt-[9px] flex w-[50px] flex-col items-center gap-[8px]">
          <svg width="38" height="34" viewBox="0 0 38 34" fill="none" stroke="#9a9a9a" strokeWidth="1.700">
            <path d="M36 32.500H21.500A15.300 15.300 0 1 1 36 17z" />
            <path d="M12 1C-2 9-2 26 12 33.500" />
            <path d="M21 8.500l2.800 5.500 6 .9-4.400 4.200 1.100 6-5.500-2.800-5.500 2.800 1.100-6-4.400-4.200 6-.9z" strokeLinejoin="round" />
          </svg>
          <span>社区</span>
        </div>
        <div className="ml-[98px] mt-[9px] flex w-[70px] flex-col items-center gap-[8px]">
          <svg width="36" height="34" viewBox="0 0 36 34" fill="none" stroke="#9a9a9a" strokeWidth="1.700">
            <rect x="1" y="2.500" width="33.500" height="29.500" rx="1" />
            <path d="M10 17.500h16" />
          </svg>
          <span>删自选</span>
        </div>
        <div className="ml-[98px] mt-[9px] flex w-[50px] flex-col items-center gap-[8px]">
          <svg width="34" height="34" viewBox="0 0 34 34" fill="none" stroke="#9a9a9a" strokeWidth="1.700">
            <circle cx="17" cy="17.500" r="15.500" />
            <path d="M11.500 12.500h11M11.500 17.500h11M11.500 22.500h11" />
          </svg>
          <span>功能</span>
        </div>
      </div>
      <div className="ml-[246px] h-[9px] w-[276px] rounded-full bg-[#8c8c8c]" />
    </footer>
  );
}

export default function App() {
  return (
    <div className="h-[1665px] w-[768px] overflow-hidden bg-white leading-none [font-family:Inter,'Noto_Sans_CJK_SC',sans-serif]">
      <Header />
      <Quote />
      <RankBanner />
      <div className="h-[7px] bg-[#f4f4f4]" />
      <PeriodTabs />
      <Summary />
      <main className="flex h-[803px] items-start">
        <Chart />
        <OrderBook />
      </main>
      <DanmakuBar />
      <PromoBar />
      <div className="mt-[21px] h-[7px] bg-[#f4f4f4]" />
      <SectionTabs />
      <BottomBar />
    </div>
  );
}
